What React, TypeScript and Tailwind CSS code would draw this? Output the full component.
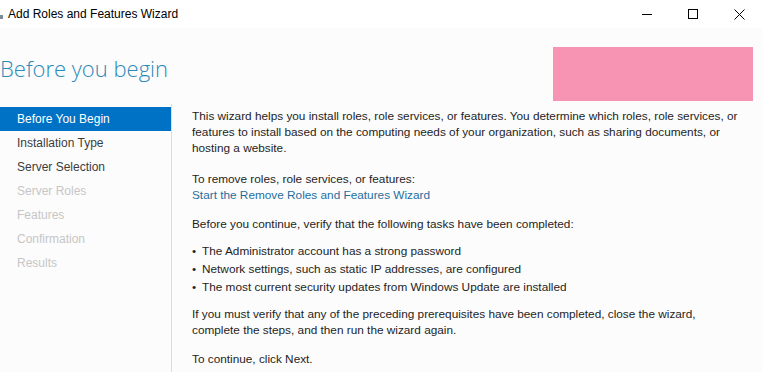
const STEPS = [
  { label: "Before You Begin", state: "active" },
  { label: "Installation Type", state: "enabled" },
  { label: "Server Selection", state: "enabled" },
  { label: "Server Roles", state: "disabled" },
  { label: "Features", state: "disabled" },
  { label: "Confirmation", state: "disabled" },
  { label: "Results", state: "disabled" },
];

const font = { fontFamily: '"Segoe UI", "Liberation Sans", Arial, sans-serif' };

export default function App() {
  return (
    <div className="w-[762px] h-[372px] overflow-hidden bg-[#fcfcfc] text-[#1e1e1e]" style={font}>
      {/* Title bar */}
      <div className="h-[28px] bg-white flex items-center">
        <div className="w-[3px] h-[4px] bg-[#7a8a9a] mt-[6px]" />
        <div className="ml-[5px] text-[12px] text-black">Add Roles and Features Wizard</div>
        <div className="flex-1" />
        <div className="flex items-center h-full">
          <div className="w-[46px] h-full flex items-center justify-center">
            <div className="w-[10px] h-px bg-black" />
          </div>
          <div className="w-[46px] h-full flex items-center justify-center">
            <div className="w-[10px] h-[10px] border border-black" />
          </div>
          <div className="w-[46px] h-full flex items-center justify-center">
            <svg width="11" height="11" viewBox="0 0 11 11">
              <path d="M0.5 0.5 L10.5 10.5 M10.5 0.5 L0.5 10.5" stroke="#000" strokeWidth="1" />
            </svg>
          </div>
        </div>
      </div>

      {/* Header */}
      <div className="flex items-start h-[76px]">
        <div className="pt-[25px] text-[22px] font-light text-[#2b8ab8] leading-[30px]" style={{ fontFamily: '"Open Sans", "Liberation Sans", sans-serif' }}>
          Before you begin
        </div>
        <div className="flex-1" />
        <div className="mt-[19px] mr-[9px] w-[200px] h-[54px] bg-[#f794b4]" />
      </div>

      {/* Body */}
      <div className="flex h-[268px]">
        <div className="w-[172px] border-r border-[#dcdcdc] pt-[3px]">
          {STEPS.map((s) => (
            <div
              key={s.label}
              className={
                "h-[24px] pl-[17px] flex items-center text-[12px] " +
                (s.state === "active"
                  ? "bg-[#0072c6] text-white"
                  : s.state === "enabled"
                  ? "text-[#3c3c3c]"
                  : "text-[#c6c6c6]")
              }
            >
              {s.label}
            </div>
          ))}
        </div>

        <div className="pl-[20px] pt-[4px] text-[11.8px] leading-[16px]">
          <p>
            This wizard helps you install roles, role services, or features. You determine which roles, role services, or
            <br />
            features to install based on the computing needs of your organization, such as sharing documents, or
            <br />
            hosting a website.
          </p>
          <p className="mt-[15px]">To remove roles, role services, or features:</p>
          <p className="text-[#1f6f9f]">Start the Remove Roles and Features Wizard</p>
          <p className="mt-[13px]">Before you continue, verify that the following tasks have been completed:</p>
          <ul className="mt-[10px] leading-[18px]">
            <li className="flex"><span className="w-[10px]">•</span>The Administrator account has a strong password</li>
            <li className="flex"><span className="w-[10px]">•</span>Network settings, such as static IP addresses, are configured</li>
            <li className="flex"><span className="w-[10px]">•</span>The most current security updates from Windows Update are installed</li>
          </ul>
          <p className="mt-[10px]">
            If you must verify that any of the preceding prerequisites have been completed, close the wizard,
            <br />
            complete the steps, and then run the wizard again.
          </p>
          <p className="mt-[13px]">To continue, click Next.</p>
        </div>
      </div>
    </div>
  );
}
